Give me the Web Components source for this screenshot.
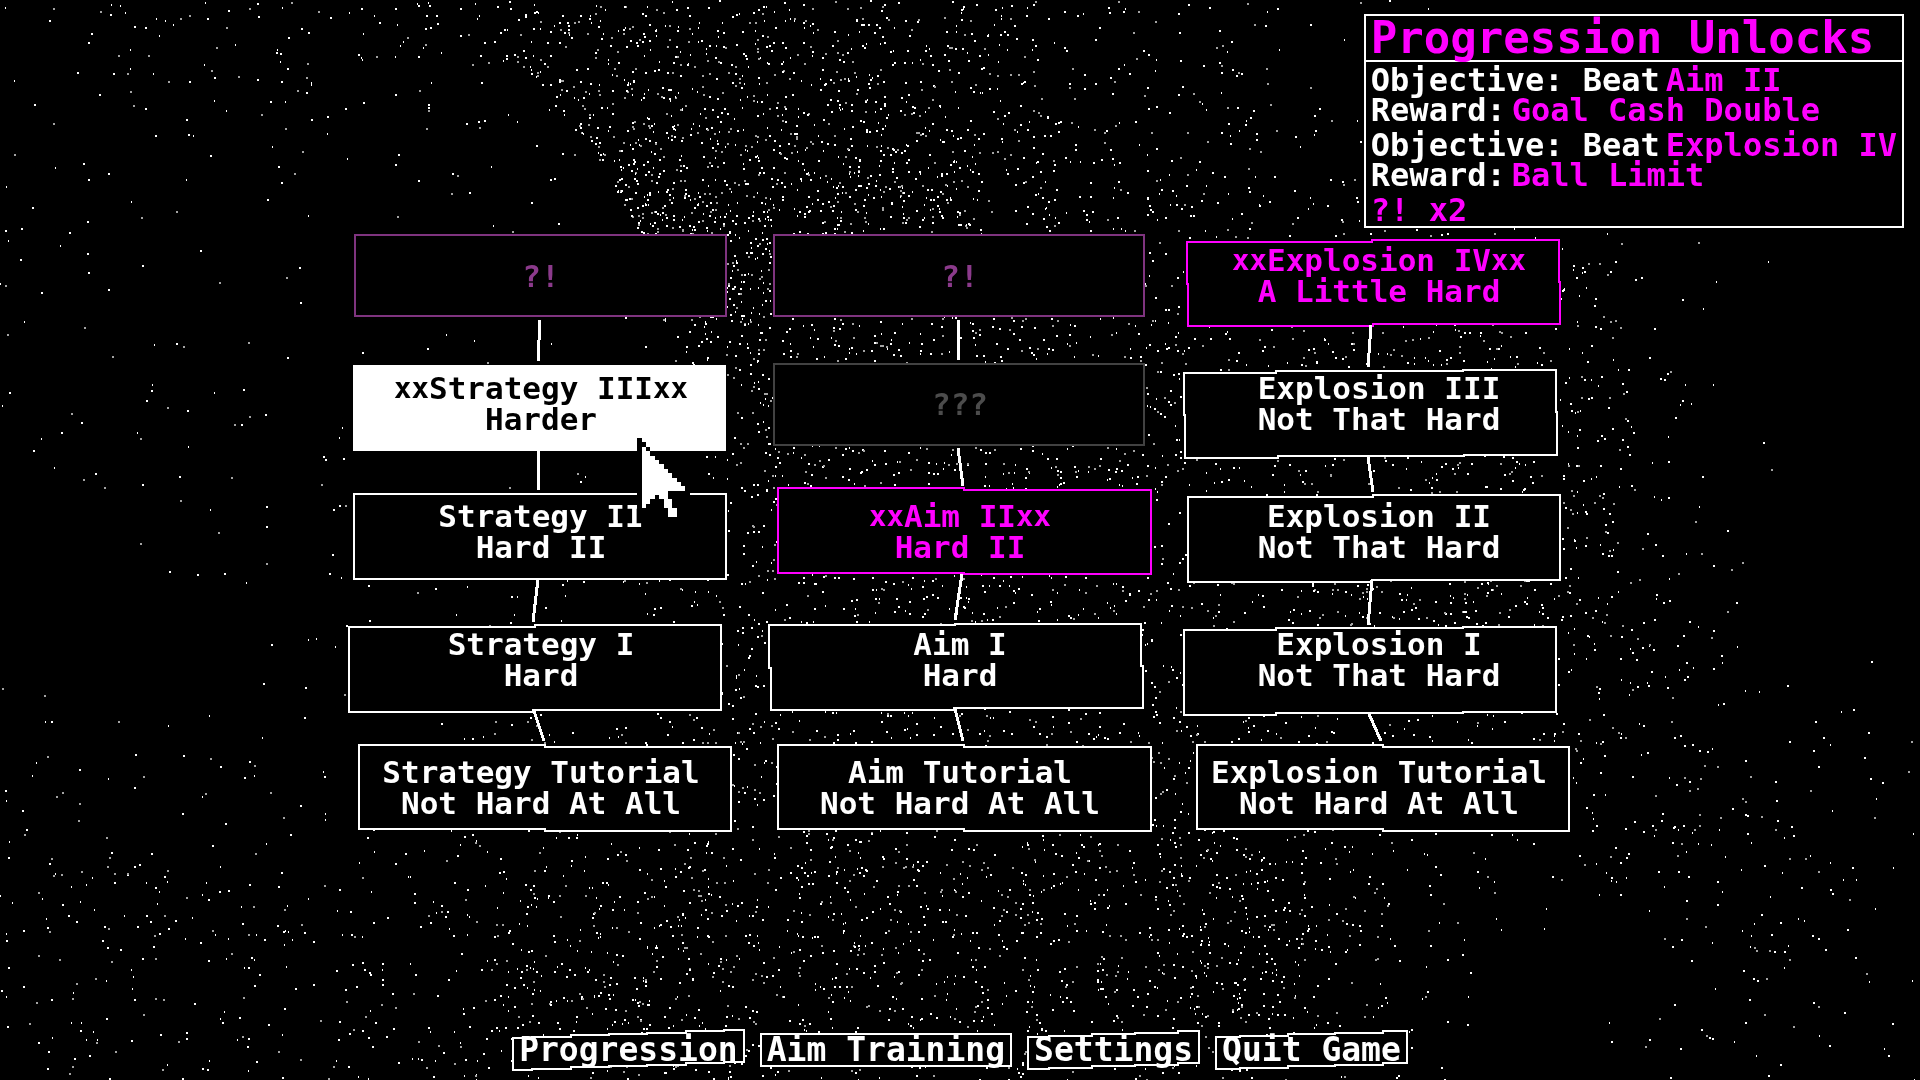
<!DOCTYPE html>
<html lang="en">
<head>
<meta charset="utf-8">
<title>Progression</title>
<style>
html, body { margin: 0; background: #000; color: #fff; }
body { font-family: "DejaVu Sans Mono", "Liberation Mono", monospace; font-weight: 700; }
</style>
</head>
<body>
<game-screen>
  <unlock-panel slot="panel" heading="Progression Unlocks">
    <unlock-goal goal="Aim II" reward="Goal Cash Double"></unlock-goal>
    <unlock-goal goal="Explosion IV" reward="Ball Limit"></unlock-goal>
    <span>?! x2</span>
  </unlock-panel>

  <level-node tone="secret" name="?!" frame="M0 1H371V82H0Z" link="M184 86L184 106L183 127"></level-node>
  <level-node tone="secret" name="?!" frame="M0 1H370V82H0Z" link="M184 86V126"></level-node>
  <level-node tone="goal" starred name="Explosion IV" rank="A Little Hard" frame="M-6 8H179V6H366V48H367V90H180V92H-5V50H-6Z" link="M178 91L175 133"></level-node>

  <level-node tone="active" starred name="Strategy III" rank="Harder" frame="M-1 4H370V88H-1Z" link="M183 89V128"></level-node>
  <level-node tone="locked" name="???" frame="M0 2H370V83H0Z" link="M184 86L189 124"></level-node>
  <level-node name="Explosion III" rank="Not That Hard" frame="M-9 11H83V9H270V8H363V50H364V93H271V94H85V96H-8V53H-9Z" link="M175 95L180 130"></level-node>

  <level-node name="Strategy II" rank="Hard II" frame="M-1 4H371V89H-1Z" link="M183 89L178 132"></level-node>
  <level-node tone="goal" starred name="Aim II" rank="Hard II" frame="M4 -2H190V0H377V84H190V83H4Z" link="M188 84L181 130"></level-node>
  <level-node name="Explosion II" rank="Not That Hard" frame="M-5 7H180V5H367V90H179V92H-5Z" link="M179 90L175 135"></level-node>

  <level-node name="Strategy I" rank="Hard" frame="M-6 9H180V7H366V92H178V94H-6Z" link="M179 93L189 123"></level-node>
  <level-node name="Aim I" rank="Hard" frame="M-5 7H181V6H367V48H369V90H180V92H-3V50H-5Z" link="M181 91L189 123"></level-node>
  <level-node name="Explosion I" rank="Not That Hard" frame="M-9 12H83V10H270V9H363V94H270V95H83V97H-9Z" link="M176 96L188 123"></level-node>

  <level-node name="Strategy Tutorial" rank="Not Hard At All" frame="M4 -1H190V1H376V85H190V83H4Z"></level-node>
  <level-node name="Aim Tutorial" rank="Not Hard At All" frame="M4 -1H190V1H377V85H190V83H4Z"></level-node>
  <level-node name="Explosion Tutorial" rank="Not Hard At All" frame="M4 -1H190V1H376V85H190V83H4Z"></level-node>

  <menu-button slot="menu" steps="6" rise="8">Progression</menu-button>
  <menu-button slot="menu" steps="0" rise="0">Aim Training</menu-button>
  <menu-button slot="menu" steps="4" rise="6">Settings</menu-button>
  <menu-button slot="menu" steps="4" rise="6">Quit Game</menu-button>
</game-screen>

<script>
class StarField extends HTMLElement {
  connectedCallback() {
    this.attachShadow({ mode: 'open' }).innerHTML = `
      <style>
        :host { display: block; overflow: hidden; }
        canvas { display: block; width: 100%; height: 100%; }
      </style>
      <canvas></canvas>`;
    this.draw();
  }
  draw() {
    const canvas = this.shadowRoot.querySelector('canvas');
    const w = canvas.width = this.clientWidth;
    const h = canvas.height = this.clientHeight;
    const ctx = canvas.getContext('2d');
    // Density of the dust, per cent, on a coarse grid over the whole sky.
    const grid = [
      [0, 4, 6, 7, 17, 16, 13, 11, 6, 4, 1, 0, 0, 0, 0],
      [0, 2, 4, 4, 12, 24, 22, 17, 7, 6, 4, 1, 0, 0, 0],
      [0, 0, 2, 3, 3, 26, 32, 22, 12, 8, 10, 12, 2, 0, 0],
      [0, 1, 1, 2, 2, 9, 20, 20, 14, 10, 11, 12, 3, 0, 0],
      [0, 0, 1, 2, 3, 7, 14, 16, 14, 9, 11, 26, 3, 0, 0],
      [1, 0, 1, 1, 6, 10, 12, 12, 12, 10, 12, 13, 8, 1, 0],
      [3, 2, 2, 5, 6, 12, 14, 14, 13, 13, 10, 3, 6, 5, 1],
      [4, 5, 5, 4, 12, 12, 12, 12, 12, 20, 6, 0, 1, 4, 1],
      [4, 5, 5, 4, 16, 15, 13, 13, 10, 12, 6, 0, 0, 2, 1]
    ];
    // Left rim of the nebula: [height, edge] pairs as fractions of the sky.
    const rimLine = [[0, 0.245], [0.055, 0.268], [0.139, 0.309], [0.22, 0.335], [0.3, 0.346], [0.45, 0.37]];
    const rimAt = v => {
      for (let k = 1; k < rimLine.length; k++) {
        const [v0, x0] = rimLine[k - 1], [v1, x1] = rimLine[k];
        if (v <= v1) return x0 + (x1 - x0) * (v - v0) / (v1 - v0);
      }
      return 0;
    };
    let seed = 20977;
    const rnd = () => {
      seed = (seed + 0x6D2B79F5) | 0;
      let t = Math.imul(seed ^ (seed >>> 15), 1 | seed);
      t = (t + Math.imul(t ^ (t >>> 7), 61 | t)) ^ t;
      return ((t ^ (t >>> 14)) >>> 0) / 4294967296;
    };
    for (let i = 0; i < 110000; i++) {
      const u = rnd(), v = rnd(), roll = rnd(), shade = rnd();
      const gx = Math.min(u * 14, 13.999), gy = Math.min(v * 8, 7.999);
      const c = Math.floor(gx), r = Math.floor(gy), fx = gx - c, fy = gy - r;
      let d = (grid[r][c] * (1 - fx) + grid[r][c + 1] * fx) * (1 - fy)
            + (grid[r + 1][c] * (1 - fx) + grid[r + 1][c + 1] * fx) * fy;
      if (v < 0.45) {
        const off = u - rimAt(v);
        if (off > 0) {
          d += 48 * Math.exp(-off / 0.022) * Math.exp(-Math.pow((v - 0.18) / 0.085, 2));
        } else {
          const far = Math.max(0, 0.5 * (0.08 - v) / 0.08);
          d = d * far + (v < 0.17 && u > 0.03 + v * 0.4 ? 4 * (1 - v * 3) : 1.2);
        }
      }
      if (roll * 100 < d) {
        ctx.fillStyle = shade < 0.75 ? '#fff' : '#a4a4a4';
        ctx.fillRect(Math.floor(u * w), Math.floor(v * h), shade > 0.12 && shade < 0.4 ? 1 : 2, 2);
      }
    }
  }
}
customElements.define('star-field', StarField);

class GameScreen extends HTMLElement {
  connectedCallback() {
    this.attachShadow({ mode: 'open' }).innerHTML = `
      <style>
        :host { display: flex; flex-direction: column; position: relative; min-height: 100vh; box-sizing: border-box; isolation: isolate; overflow: hidden; cursor: none; }
        star-field { position: absolute; inset: 0; z-index: -1; }
        aside { position: absolute; top: 14px; right: 16px; }
        main { display: grid; grid-template-columns: repeat(3, 372px); grid-auto-rows: 84px; gap: 44px 47px; justify-content: center; padding-top: 234px; }
        nav { display: flex; justify-content: center; gap: 17px; margin-top: auto; padding: 24px 0 13px; }
      </style>
      <star-field></star-field>
      <main><slot></slot></main>
      <nav aria-label="Game menu"><slot name="menu"></slot></nav>
      <aside><slot name="panel"></slot></aside>`;
  }
}
customElements.define('game-screen', GameScreen);

class LevelNode extends HTMLElement {
  connectedCallback() {
    const get = n => this.getAttribute(n) || '';
    const mark = this.hasAttribute('starred') ? '<small>xx</small>' : '';
    const active = get('tone') === 'active';
    this.attachShadow({ mode: 'open' }).innerHTML = `
      <style>
        :host { display: block; position: relative; --ink: #fff; --line: #fff; --fill: #000; }
        :host([tone="goal"]) { --ink: #f0f; --line: #f0f; }
        :host([tone="secret"]) { --ink: #8b3a8b; --line: #7f347f; }
        :host([tone="locked"]) { --ink: #4c4c4c; --line: #424242; }
        :host([tone="active"]) { --ink: #000; --fill: #fff; z-index: 1; }
        button { display: flex; flex-direction: column; align-items: center; justify-content: center; width: 100%; height: 100%; padding: 0; border: 0; background: none; color: var(--ink); font: inherit; font-size: 31px; line-height: 31px; white-space: pre; cursor: inherit; position: relative; }
        .name { display: flex; align-items: center; }
        small { font-size: 29px; line-height: 31px; }
        svg { position: absolute; overflow: visible; pointer-events: none; }
        .frame { inset: 0; width: 100%; height: 100%; }
        .frame path { fill: var(--fill); stroke: var(--line); stroke-width: 2; shape-rendering: crispEdges; }
        .frame .link { fill: none; stroke: #fff; stroke-width: 3; }
        .pointer { left: 282px; top: 76px; width: 53px; height: 79px; }
      </style>
      <svg class="frame" aria-hidden="true"><path d="${get('frame')}"/><path class="link" d="${get('link')}"/></svg>
      <button type="button"><span class="name">${mark}${get('name')}${mark}</span>${get('rank') ? `<span>${get('rank')}</span>` : ''}</button>
      ${active ? `<svg class="pointer" viewBox="0 0 12 18" aria-hidden="true" shape-rendering="crispEdges">
        <path fill="#000" d="M0 0h1v1h1v1h1v1h1v1h1v1h1v1h1v1h1v1h1v1h1v1h1v1h1v2H8v2h1v2h1v3H6v-2H5v-2H4v1H3v1H2v1H0z"/>
        <path fill="#fff" d="M1 2h1v1h1v1h1v1h1v1h1v1h1v1h1v1h1v1h1v1h1v1H7v2h1v2h1v2H7v-2H6v-2H5v-1H4v1H3v1H2v1H1z"/>
      </svg>` : ''}`;
  }
}
customElements.define('level-node', LevelNode);

class MenuButton extends HTMLElement {
  connectedCallback() {
    const steps = +this.getAttribute('steps'), rise = +this.getAttribute('rise');
    let top = `M0 ${rise / 2}`, bottom = '';
    const level = k => steps ? rise / 2 - rise * k / steps : 0;
    for (let k = 1; k <= steps; k++) {
      const x = (k - 0.5) * 100 / steps;
      top += `H${x}V${level(k)}`;
      bottom = `V${32 + level(k)}H${x}` + bottom;
    }
    this.attachShadow({ mode: 'open' }).innerHTML = `
      <style>
        :host { display: block; }
        button { display: block; position: relative; isolation: isolate; height: 34px; padding: 0 6px; border: 0; background: none; color: #fff; font: inherit; font-size: 33px; line-height: 34px; cursor: inherit; }
        svg { position: absolute; left: 0; top: 1px; width: 100%; height: 32px; overflow: visible; z-index: -1; }
        path { fill: #000; stroke: #fff; stroke-width: 2; vector-effect: non-scaling-stroke; shape-rendering: crispEdges; }
      </style>
      <button type="button"><svg viewBox="0 0 100 32" preserveAspectRatio="none" aria-hidden="true"><path d="${top}H100${bottom}V${32 + rise / 2}H0Z"/></svg><slot></slot></button>`;
  }
}
customElements.define('menu-button', MenuButton);

class UnlockPanel extends HTMLElement {
  connectedCallback() {
    this.attachShadow({ mode: 'open' }).innerHTML = `
      <style>
        :host { display: block; border: 2px solid #fff; background: #000; color: #f0f; }
        h2 { margin: 0; padding: 0 5px; border-bottom: 2px solid #fff; font-size: 44px; line-height: 44px; font-weight: inherit; white-space: nowrap; }
        div { display: flex; flex-direction: column; gap: 5px; padding: 3px 5px 1px; font-size: 32px; line-height: 30px; }
      </style>
      <h2>${this.getAttribute('heading')}</h2>
      <div><slot></slot></div>`;
  }
}
customElements.define('unlock-panel', UnlockPanel);

class UnlockGoal extends HTMLElement {
  connectedCallback() {
    this.attachShadow({ mode: 'open' }).innerHTML = `
      <style>
        :host { display: block; white-space: nowrap; }
        p { display: flex; gap: 6px; margin: 0; }
        span { color: #fff; }
      </style>
      <p><span>Objective: Beat</span>${this.getAttribute('goal')}</p>
      <p><span>Reward:</span>${this.getAttribute('reward')}</p>`;
  }
}
customElements.define('unlock-goal', UnlockGoal);
</script>
</body>
</html>
